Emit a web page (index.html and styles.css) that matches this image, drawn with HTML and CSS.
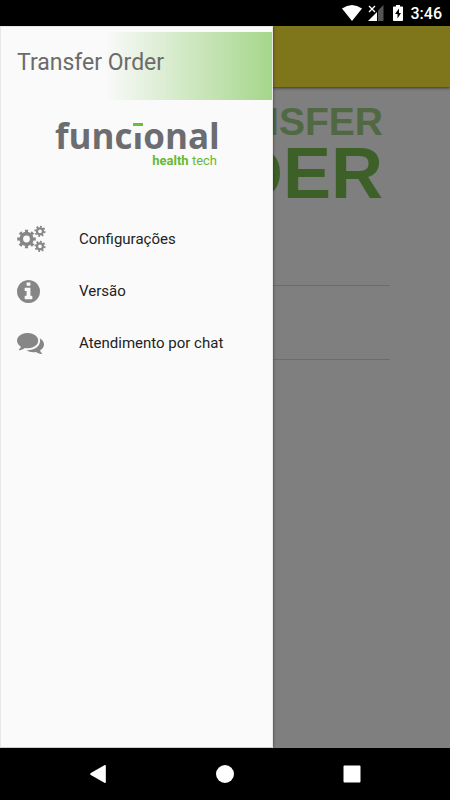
FILE: index.html
```html
<!DOCTYPE html>
<html lang="pt-BR">

<head>
  <meta charset="UTF-8">
  <meta name="viewport" content="width=device-width, initial-scale=1.0">
  <title>Transfer Order</title>
  <link rel="stylesheet" href="styles.css">
</head>

<body>

  <div class="status-bar">
    <svg class="wifi" width="20" height="16" viewBox="0 0 20 16">
      <path d="M0 3.500Q10-3.500 20 3.500L10 16Z" fill="#fff"/>
    </svg>
    <svg class="signal" width="16" height="16" viewBox="0 0 16 16">
      <path d="M10 5.500L15.500 0V16H10Z" fill="#555"/>
      <path d="M0 16L9 7V16Z" fill="#fff"/>
      <path d="M1 1L7 7M7 1L1 7" stroke="#fff" stroke-width="1.300"/>
    </svg>
    <svg class="battery" width="10" height="16" viewBox="0 0 10 16">
      <path d="M3 0H7V1.500H9.300Q10 1.500 10 2.300V15.200Q10 16 9.200 16H.8Q0 16 0 15.200V2.300Q0 1.500.7 1.500H3Z" fill="#fff"/>
      <path d="M6 3.500L2 9H4.500V13.500L8 8H6Z" fill="#000"/>
    </svg>
    <span class="clock">3:46</span>
  </div>

  <div class="app">
    <main class="page">
      <div class="toolbar"></div>
      <form class="login">
        <div class="brand">
          <div class="brand-top">TRANSFER</div>
          <div class="brand-bottom">ORDER</div>
        </div>
        <input class="field" type="text" aria-label="Login">
        <input class="field" type="password" aria-label="Senha">
      </form>
    </main>

    <div class="backdrop"></div>

    <!-- Side menu -->
    <aside class="drawer">
      <h1 class="drawer-title">Transfer Order</h1>

      <div class="logo">
        <div class="logo-name">func<span class="logo-i">i</span>onal</div>
        <div class="logo-sub"><b>health</b> tech</div>
      </div>

      <nav class="menu">
        <a class="menu-item" href="#">
          <span class="menu-icon">
            <svg width="30" height="30" viewBox="0 0 30 30" fill="none" stroke="#868686">
              <circle cx="9.500" cy="15" r="5.300" stroke-width="3.800"/>
              <circle cx="9.500" cy="15" r="7.900" stroke-width="2.800" pathLength="16" stroke-dasharray="1 1" stroke-dashoffset=".5"/>
              <circle cx="23" cy="7.300" r="3" stroke-width="2.200"/>
              <circle cx="23" cy="7.300" r="4.700" stroke-width="1.800" pathLength="16" stroke-dasharray="1 1" stroke-dashoffset="0"/>
              <circle cx="23" cy="22.300" r="3" stroke-width="2.200"/>
              <circle cx="23" cy="22.300" r="4.700" stroke-width="1.800" pathLength="16" stroke-dasharray="1 1" stroke-dashoffset="0"/>
            </svg>
          </span>
          Configurações
        </a>
        <a class="menu-item" href="#">
          <span class="menu-icon">
            <svg width="23" height="23" viewBox="128 128 1536 1536" fill="#868686">
              <path d="M1152 1376v-160q0-14-9-23t-23-9h-96v-512q0-14-9-23t-23-9h-320q-14 0-23 9t-9 23v160q0 14 9 23t23 9h96v320h-96q-14 0-23 9t-9 23v160q0 14 9 23t23 9h448q14 0 23-9t9-23zm-128-896v-160q0-14-9-23t-23-9h-192q-14 0-23 9t-9 23v160q0 14 9 23t23 9h192q14 0 23-9t9-23zm640 416q0 209-103 385.500t-279.500 279.500-385.500 103-385.500-103-279.500-279.500-103-385.500 103-385.500 279.500-279.500 385.500-103 385.500 103 279.500 279.500 103 385.500z"/>
            </svg>
          </span>
          Versão
        </a>
        <a class="menu-item" href="#">
          <span class="menu-icon">
            <svg width="27" height="27" viewBox="0 64 1792 1792" fill="#868686">
              <path d="M1408 768q0 139-94 257t-256.500 186.500-353.500 68.500q-86 0-176-16-124 88-278 128-36 9-86 16h-3q-11 0-20.500-8t-11.500-21q-1-3-1-6.500t.5-6.500 2-6l2.500-5 3.500-5.500 4-5 4.500-5 4-4.500q5-6 23-25t26-29.500 22.500-29 25-38.500 20.500-44q-124-72-195-177t-71-224q0-139 94-257t256.500-186.500 353.500-68.500 353.500 68.500 256.500 186.500 94 257zm384 256q0 120-71 224.500t-195 176.500q10 24 20.500 44t25 38.500 22.500 29 26 29.500 23 25q1 1 4 4.500t4.500 5 4 5 3.500 5.500l2.500 5 2 6 .5 6.500-1 6.500q-3 14-13 22t-22 7q-50-7-86-16-154-40-278-128-90 16-176 16-271 0-472-132 58 4 88 4 161 0 309-45t264-129q125-92 192-212t67-254q0-77-23-152 129 71 204 178t75 230z"/>
            </svg>
          </span>
          Atendimento por chat
        </a>
      </nav>
    </aside>
  </div>

  <!-- Android navigation -->
  <div class="nav-bar">
    <button class="nav-btn" type="button" aria-label="Voltar">
      <svg width="18" height="18" viewBox="0 0 18 18" fill="#fff"><path d="M15.800 0Q16.800-.2 16.800 1V17Q16.800 18.200 15.800 18L1.800 10Q.5 9 1.800 8Z"/></svg>
    </button>
    <button class="nav-btn" type="button" aria-label="Início">
      <svg width="18" height="18" viewBox="0 0 18 18" fill="#fff"><circle cx="9" cy="9" r="9"/></svg>
    </button>
    <button class="nav-btn" type="button" aria-label="Recentes">
      <svg width="18" height="18" viewBox="0 0 18 18" fill="#fff"><rect x=".5" y=".5" width="17" height="17" rx="1"/></svg>
    </button>
  </div>

</body>

</html>
```

FILE: styles.css
```css
* {
  box-sizing: border-box;
}

body {
  margin: 0;
  height: 100vh;
  display: flex;
  flex-direction: column;
  font-family: Roboto, "Liberation Sans", sans-serif;
  font-size: 15px;
  color: #222;
  background-color: #000;
}

.status-bar {
  height: 26px;
  padding-right: 8px;
  display: flex;
  align-items: center;
  justify-content: flex-end;
  color: #fff;
}

.signal {
  margin-left: 6px;
}

.battery {
  margin-left: 9px;
}

.clock {
  margin-left: 8px;
  font-size: 16px;
  font-weight: 500;
}

.app {
  position: relative;
  flex: 1;
  overflow: hidden;
}

/* Page under the menu */
.page {
  height: 100%;
  background-color: #fff;
}

.toolbar {
  height: 61px;
  background-color: #ffea34;
  box-shadow: 0 1px 3px rgba(0, 0, 0, .6);
}

.login {
  padding: 17px 60px;
}

.brand {
  padding-right: 7px;
  display: flex;
  flex-direction: column;
  align-items: flex-end;
  font-family: "Liberation Sans", Arial, sans-serif;
  font-weight: bold;
}

.brand-top {
  font-size: 39px;
  line-height: 36px;
  color: #a0d284;
}

.brand-bottom {
  font-size: 72px;
  line-height: 66px;
  color: #7abf50;
}

.field {
  display: block;
  width: 100%;
  height: 32px;
  margin-top: 42px;
  padding: 0;
  border: none;
  border-bottom: 1px solid #d8d8d8;
  background: none;
}

.field:first-of-type {
  margin-top: 48px;
}

.backdrop {
  position: absolute;
  inset: 0;
  background-color: rgba(0, 0, 0, .5);
}

/* Side menu */
.drawer {
  position: absolute;
  top: 0;
  bottom: 0;
  left: 0;
  width: 273px;
  padding-top: 5px;
  border: 1px solid #e8e8e4;
  border-bottom-color: #ccc;
  background-color: #fafafa;
  box-shadow: 0 0 3px rgba(0, 0, 0, .5);
}

.drawer-title {
  margin: 0;
  height: 68px;
  padding-left: 16px;
  font-size: 23px;
  font-weight: normal;
  line-height: 62px;
  color: #6b6b6b;
  background: linear-gradient(to right, #fafafa 38%, #a6d68b);
}

.logo {
  width: 162px;
  height: 113px;
  margin-left: 54px;
  padding-top: 17px;
}

.logo-name {
  font-family: "Open Sans", "Noto Sans", sans-serif;
  font-size: 35px;
  font-weight: bold;
  line-height: 37px;
  color: #6c6d70;
}

.logo-i {
  position: relative;
}

/* green bar in place of the dot */
.logo-i::before {
  content: "";
  position: absolute;
  top: 11px;
  left: 0;
  width: 100%;
  height: 7px;
  border-top: 3px solid #6abf3a;
  background-color: #fafafa;
  box-shadow: 0 -3px 0 #fafafa;
}

.logo-sub {
  font-size: 13px;
  line-height: 14px;
  text-align: right;
  color: #66b933;
}

.menu-item {
  height: 52px;
  padding-left: 16px;
  display: flex;
  align-items: center;
  color: #222;
  text-decoration: none;
}

.menu-icon {
  width: 62px;
  display: flex;
}

.nav-bar {
  height: 52px;
  padding: 0 35px;
  display: flex;
}

.nav-btn {
  flex: 1;
  display: flex;
  align-items: center;
  justify-content: center;
  padding: 0;
  border: none;
  background: none;
  cursor: pointer;
}
```
